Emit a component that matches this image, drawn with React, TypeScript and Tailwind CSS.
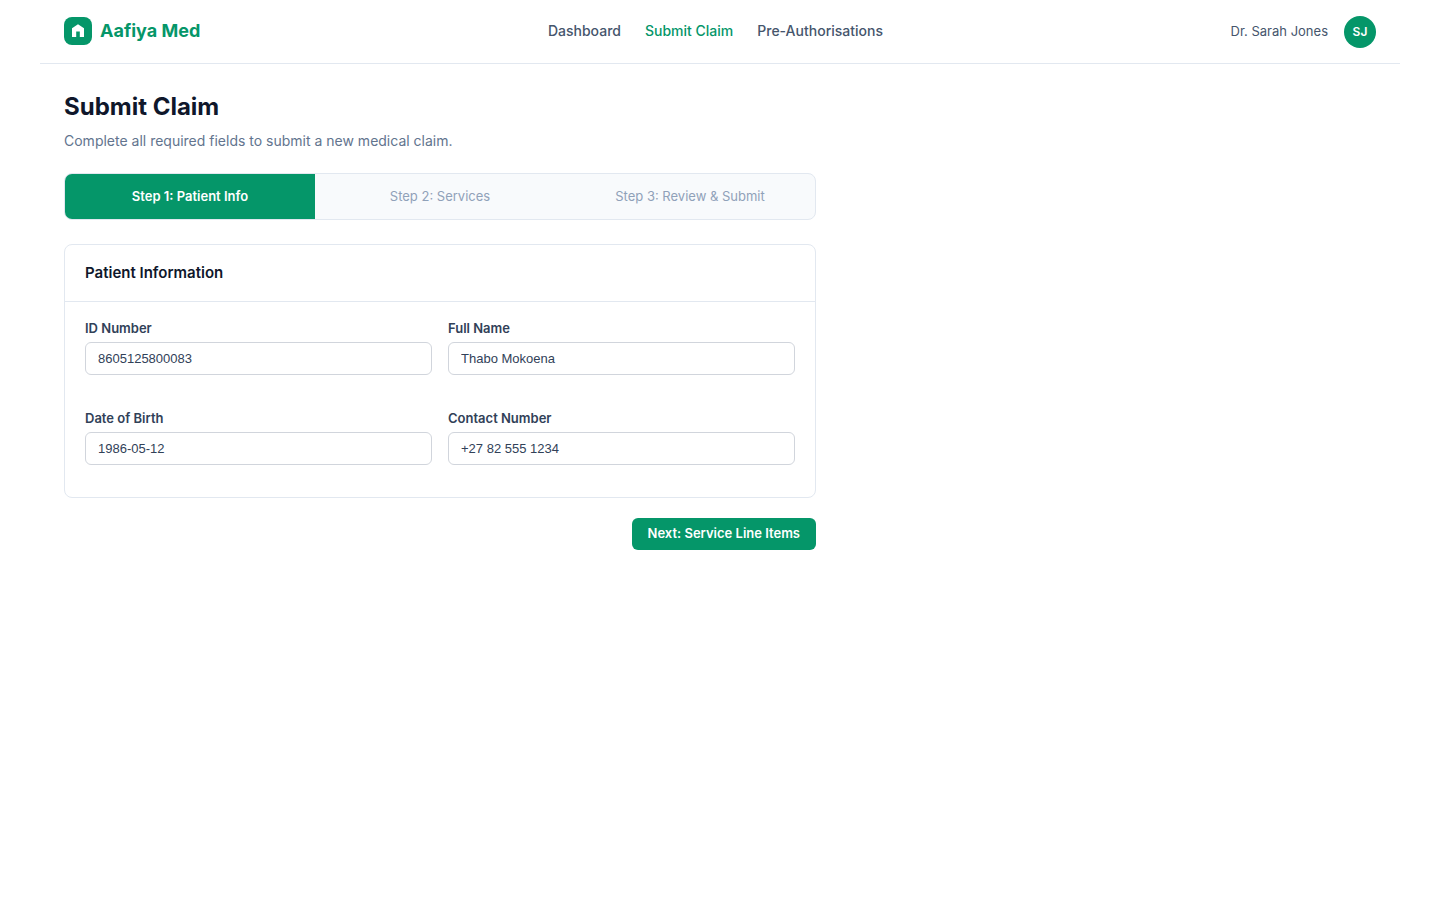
import { useState } from "react";

const NAV_LINKS = [
  { label: "Dashboard", href: "#dashboard" },
  { label: "Submit Claim", href: "#submit-claim" },
  { label: "Pre-Authorisations", href: "#pre-authorisations" },
];

const STEPS = ["Step 1: Patient Info", "Step 2: Services", "Step 3: Review & Submit"];

const FIELDS = [
  { id: "idNumber", label: "ID Number" },
  { id: "fullName", label: "Full Name" },
  { id: "dateOfBirth", label: "Date of Birth" },
  { id: "contactNumber", label: "Contact Number" },
];

function Logo() {
  return (
    <div className="flex items-center gap-2 pb-px">
      <div className="flex h-7 w-7 items-center justify-center rounded-lg bg-[#059669]">
        <svg viewBox="0 0 16 16" className="h-4 w-4" fill="#ffffff" aria-hidden="true">
          <path d="M8 1.2L2 5.2V14H6.2V8.6H9.8V14H14V5.2L8 1.2z" />
        </svg>
      </div>
      <span className="text-lg leading-7 font-bold text-[#059669]">Aafiya Med</span>
    </div>
  );
}

export default function App() {
  const [step, setStep] = useState(0);
  const [patient, setPatient] = useState<Record<string, string>>({
    idNumber: "8605125800083",
    fullName: "Thabo Mokoena",
    dateOfBirth: "1986-05-12",
    contactNumber: "+27 82 555 1234",
  });

  return (
    <div className="min-h-screen bg-white px-10 font-['Inter',sans-serif] text-slate-900">
      <header className="flex h-16 items-center justify-between border-b border-slate-200 px-6">
        <Logo />
        <nav className="flex gap-6 pb-px text-sm leading-5 font-medium">
          {NAV_LINKS.map(({ label, href }) => (
            <a key={label} href={href} className={label === "Submit Claim" ? "text-[#059669]" : "text-slate-600"}>
              {label}
            </a>
          ))}
        </nav>
        <div className="flex items-center gap-4">
          <span className="text-[13px] text-slate-600">Dr. Sarah Jones</span>
          <div className="flex h-8 w-8 items-center justify-center rounded-full bg-[#059669] text-xs font-semibold text-white">
            SJ
          </div>
        </div>
      </header>

      <main className="max-w-[800px] p-6">
        <h1 className="text-2xl leading-[38px] font-bold">Submit Claim</h1>
        <p className="mt-1 mb-[22px] text-sm leading-[21px] text-slate-500">
          Complete all required fields to submit a new medical claim.
        </p>

        {/* Step indicator */}
        <ol className="mb-6 grid grid-cols-3 overflow-hidden rounded-lg border border-slate-200 bg-slate-50">
          {STEPS.map((label, i) => (
            <li
              key={label}
              className={`py-3 text-center text-[13px] leading-[21px] ${i === step ? "bg-[#059669] font-semibold text-white" : "text-slate-400"}`}
            >
              {label}
            </li>
          ))}
        </ol>

        <form
          onSubmit={(e) => {
            e.preventDefault();
            setStep((s) => Math.min(s + 1, STEPS.length - 1));
          }}
        >
          {/* Patient card */}
          <section className="rounded-lg border border-slate-200 bg-white">
            <h2 className="border-b border-slate-200 px-5 py-4 text-[15px] leading-6 font-semibold">
              Patient Information
            </h2>
            <div className="grid grid-cols-2 gap-x-4 gap-y-[33px] px-5 pt-4 pb-8">
              {FIELDS.map(({ id, label }) => (
                <div key={id}>
                  <label htmlFor={id} className="mb-1 block text-[13px] leading-5 font-semibold text-slate-700">
                    {label}
                  </label>
                  <input
                    id={id}
                    type="text"
                    value={patient[id]}
                    onChange={(e) => setPatient({ ...patient, [id]: e.target.value })}
                    className="block h-[33px] w-full rounded-md border border-gray-300 bg-white px-3 font-['Liberation_Sans',sans-serif] text-[13px] text-slate-700"
                  />
                </div>
              ))}
            </div>
          </section>

          <div className="mt-5 flex justify-end">
            <button type="submit" className="h-8 rounded-md bg-[#059669] px-4 text-[13px] font-semibold text-white">
              Next: Service Line Items
            </button>
          </div>
        </form>
      </main>
    </div>
  );
}
